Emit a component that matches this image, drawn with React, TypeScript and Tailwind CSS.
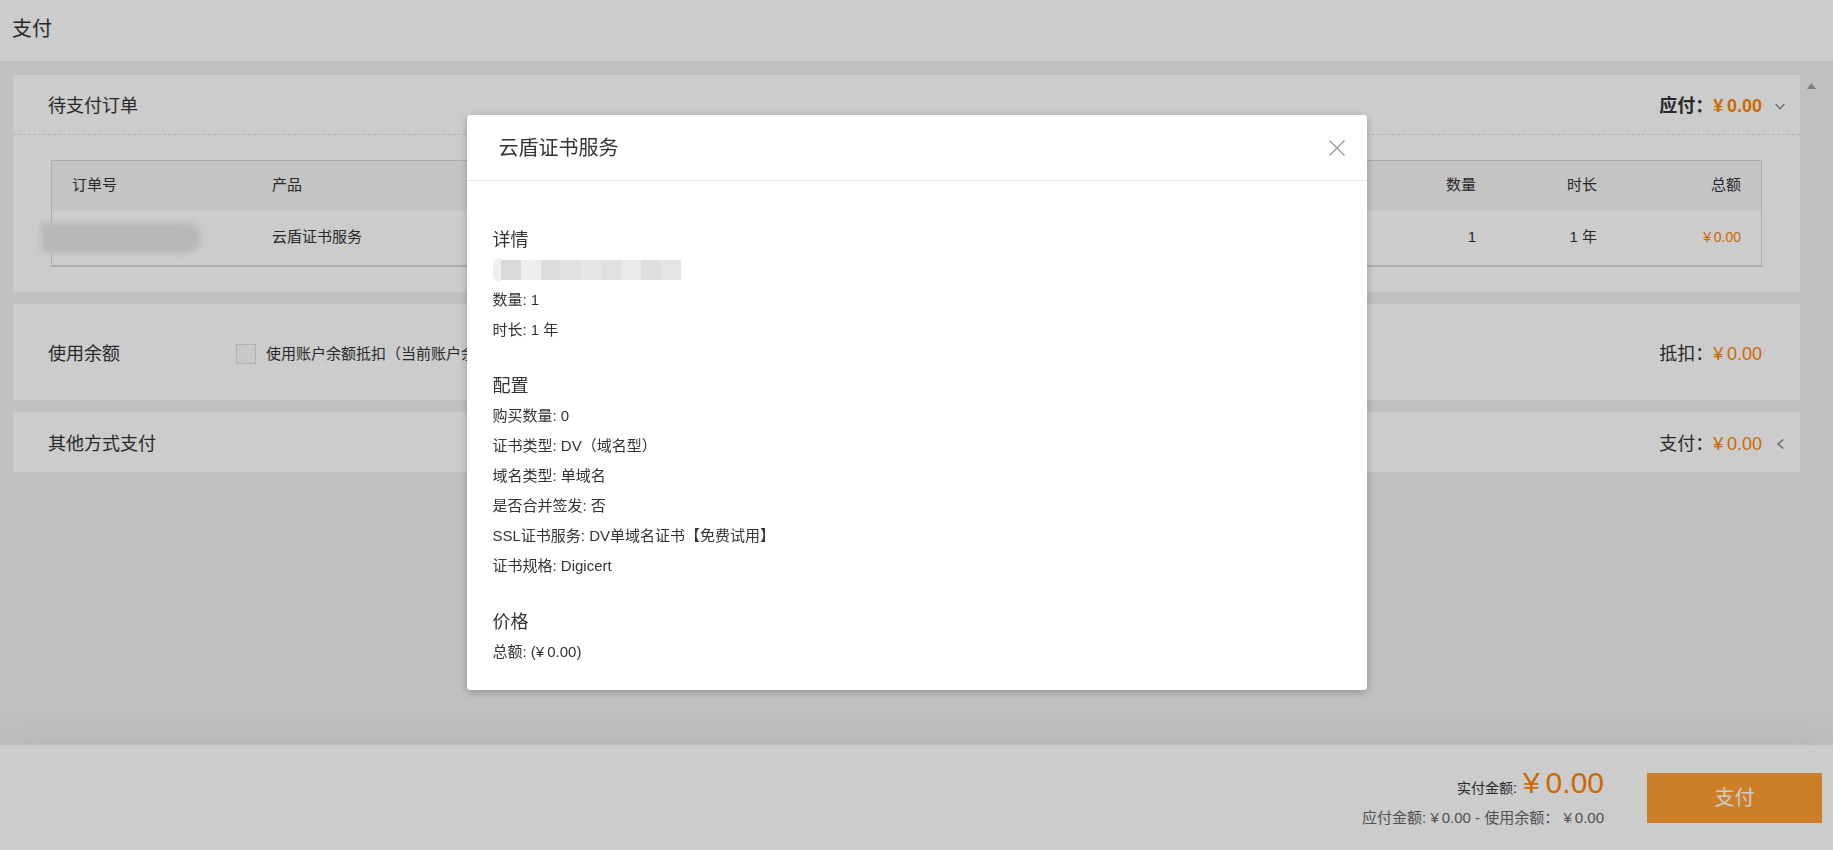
import React from 'react';

const orange = 'text-[#ff8400]';

// ¥ sign with the small gap the page shows before the number
const Money: React.FC<{ value?: string; className?: string }> = ({ value = '0.00', className = '' }) => (
  <span className={className}>
    ¥<span className="ml-[0.2em]">{value}</span>
  </span>
);

const ChevronDown: React.FC = () => (
  <svg width="10" height="7" viewBox="0 0 10 7" fill="none" stroke="#777" strokeWidth="1.2">
    <path d="M0.5 0.8 L5 5.8 L9.5 0.8" />
  </svg>
);

const ChevronLeft: React.FC = () => (
  <svg width="7" height="10" viewBox="0 0 7 10" fill="none" stroke="#777" strokeWidth="1.2">
    <path d="M6.2 0.5 L1 5 L6.2 9.5" />
  </svg>
);

const CloseIcon: React.FC = () => (
  <svg width="16" height="16" viewBox="0 0 16 16" fill="none" stroke="#9a9a9a" strokeWidth="1.3">
    <path d="M0.5 0.5 L15.5 15.5 M15.5 0.5 L0.5 15.5" />
  </svg>
);

const configItems = [
  '购买数量: 0',
  '证书类型: DV（域名型）',
  '域名类型: 单域名',
  '是否合并签发: 否',
  'SSL证书服务: DV单域名证书【免费试用】',
  '证书规格: Digicert',
];

const blurBlocks = ['#d9d9d9', '#eeeeee', '#dcdcdc', '#e1e1e1', '#e6e6e6', '#e0e0e0', '#e9e9e9', '#dedede', '#e4e4e4'];

const App: React.FC = () => {
  return (
    <div className="relative h-[850px] w-full flex flex-col bg-[#f0f0f2] overflow-hidden font-['Liberation_Sans','Noto_Sans_CJK_SC',sans-serif] text-[#333]">
      {/* Page header */}
      <div className="h-[61px] shrink-0 bg-white flex items-center pl-3 pb-1 text-[20px]">支付</div>

      <div className="flex-1 flex min-h-0">
        <div className="flex-1 pl-[13px] pt-[14px] flex flex-col gap-3">
          {/* Pending order */}
          <div className="bg-white">
            <div className="h-[60px] pt-1 border-b border-dashed border-[#e2e2e2] flex items-center pl-[35px]">
              <span className="text-[18px]">待支付订单</span>
              <div className="ml-auto flex items-center">
                <span className="text-[18px] font-bold">应付：</span>
                <Money className={`text-[18px] font-bold ${orange}`} />
                <div className="w-[38px] pl-[13px] flex items-center">
                  <ChevronDown />
                </div>
              </div>
            </div>
            <div className="px-[38px] py-[25px]">
              <div className="border border-b-2 border-[#d9d9d9] text-[15px]">
                <div className="h-[49px] bg-[#f5f5f5] flex items-center px-5">
                  <div className="w-[200px]">订单号</div>
                  <div className="flex-1">产品</div>
                  <div className="w-[100px] text-right">数量</div>
                  <div className="w-[121px] text-right">时长</div>
                  <div className="w-[144px] text-right">总额</div>
                </div>
                <div className="h-[55px] flex items-center px-5">
                  <div className="w-[200px]">
                    <div className="-ml-[31px] w-[160px] h-[30px] rounded-r-full bg-[#e6e6e6] blur-[3px]" />
                  </div>
                  <div className="flex-1">云盾证书服务</div>
                  <div className="w-[100px] text-right">1</div>
                  <div className="w-[121px] text-right">1 年</div>
                  <div className="w-[144px] text-right">
                    <Money className={`text-[14px] ${orange}`} />
                  </div>
                </div>
              </div>
            </div>
          </div>

          {/* Balance */}
          <div className="bg-white h-[96px] pt-1 flex items-center pl-[35px]">
            <span className="w-[188px] text-[18px]">使用余额</span>
            <span className="w-5 h-5 border border-[#dcdcdc] bg-[#fafafa] mr-[10px]" />
            <span className="text-[15px]">使用账户余额抵扣（当前账户余额：¥0.00）</span>
            <div className="ml-auto flex items-center">
              <span className="text-[18px]">抵扣：</span>
              <Money className={`text-[18px] ${orange}`} />
              <div className="w-[38px]" />
            </div>
          </div>

          {/* Other payment */}
          <div className="bg-white h-[60px] pt-1 flex items-center pl-[35px]">
            <span className="text-[18px]">其他方式支付</span>
            <div className="ml-auto flex items-center">
              <span className="text-[18px]">支付：</span>
              <Money className={`text-[18px] ${orange}`} />
              <div className="w-[38px] pl-[15px] flex items-center">
                <ChevronLeft />
              </div>
            </div>
          </div>
        </div>

        {/* scrollbar arrow */}
        <div className="w-[33px] shrink-0 pt-[22px] pl-[7px]">
          <svg width="9" height="6" viewBox="0 0 9 6">
            <path d="M4.5 0 L9 6 L0 6 Z" fill="#a0a0a0" />
          </svg>
        </div>
      </div>

      {/* Footer */}
      <div className="relative h-[105px] shrink-0 bg-white shadow-[0_0_45px_rgba(0,0,0,0.07)] flex items-center justify-end pr-[11px]">
        <div className="flex flex-col items-end mr-[43px]">
          <div className="flex items-baseline">
            <span className="text-[14px]">实付金额:</span>
            <Money className={`ml-[6px] text-[30px] leading-none ${orange}`} />
          </div>
          <div className="mt-[9px] text-[15px] leading-5 text-[#666]">
            应付金额: <Money /> - 使用余额： <Money />
          </div>
        </div>
        <button className="w-[175px] h-[50px] bg-[#ff9f33] text-white text-[20px]">支付</button>
      </div>

      {/* Modal overlay */}
      <div className="fixed inset-0 bg-black/20 flex justify-center items-start pt-[115px]">
        <div className="w-[900px] bg-white rounded-[3px] shadow-[0_2px_8px_rgba(0,0,0,0.25)]">
          <div className="h-[66px] border-b border-[#e3e3e3] flex items-center pl-[32px] pr-[22px]">
            <span className="text-[20px]">云盾证书服务</span>
            <button className="ml-auto">
              <CloseIcon />
            </button>
          </div>
          <div className="pl-[26px] pt-[44px] pb-[23px]">
            <div className="h-[30px] leading-[30px] text-[18px]">详情</div>
            <div className="h-[30px] flex items-center">
              <div className="flex blur-[0.6px]">
                <div className="w-[8px] h-[24px] rounded-l-full bg-[#efefef]" />
                {blurBlocks.map((c, i) => (
                  <div key={i} className="w-[20px] h-[20px] mt-[2px]" style={{ backgroundColor: c }} />
                ))}
              </div>
            </div>
            <div className="h-[30px] leading-[30px] text-[15px]">数量: 1</div>
            <div className="h-[30px] leading-[30px] text-[15px]">时长: 1 年</div>

            <div className="mt-[26px] h-[30px] leading-[30px] text-[18px]">配置</div>
            {configItems.map(item => (
              <div key={item} className="h-[30px] leading-[30px] text-[15px]">{item}</div>
            ))}

            <div className="mt-[26px] h-[30px] leading-[30px] text-[18px]">价格</div>
            <div className="h-[30px] leading-[30px] text-[15px]">
              总额: (<Money />)
            </div>
          </div>
        </div>
      </div>
    </div>
  );
};

export default App;
